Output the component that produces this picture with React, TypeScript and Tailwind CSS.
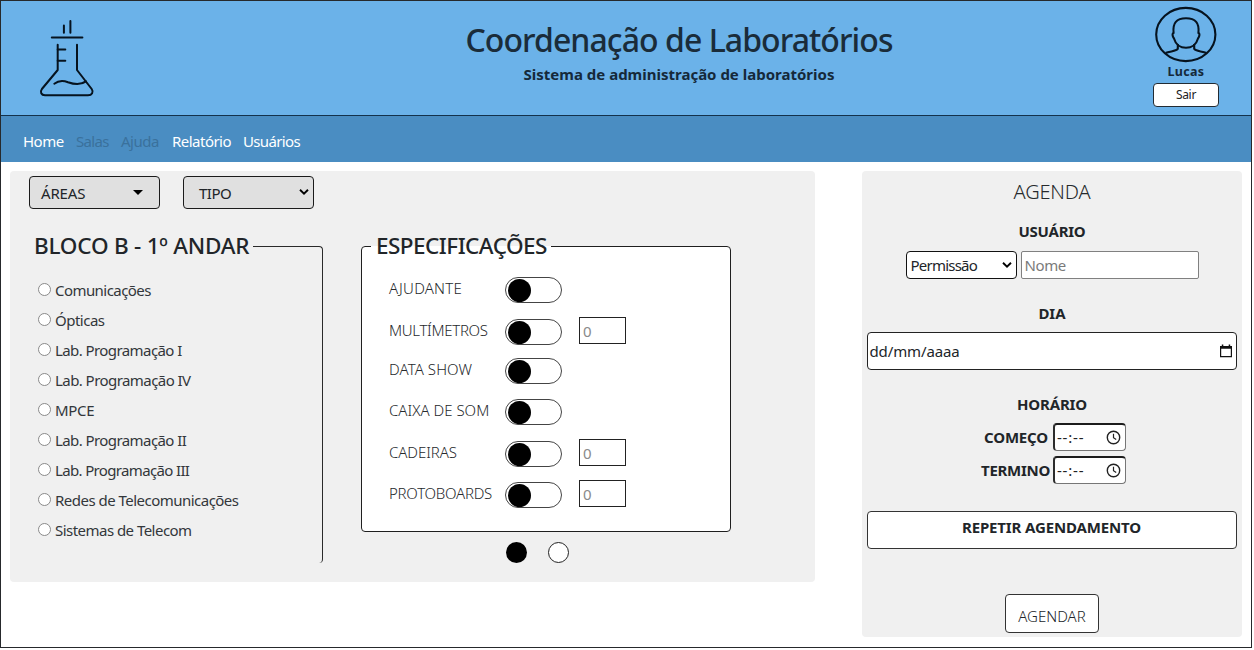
import type { ReactNode } from "react";

const labs: { name: string; tracking: string }[] = [
  { name: "Comunicações", tracking: "tracking-[-0.56px]" },
  { name: "Ópticas", tracking: "tracking-[-0.5px]" },
  { name: "Lab. Programação I", tracking: "tracking-[-0.58px]" },
  { name: "Lab. Programação IV", tracking: "tracking-[-0.56px]" },
  { name: "MPCE", tracking: "tracking-[-0.3px]" },
  { name: "Lab. Programação II", tracking: "tracking-[-0.58px]" },
  { name: "Lab. Programação III", tracking: "tracking-[-0.65px]" },
  { name: "Redes de Telecomunicações", tracking: "tracking-[-0.52px]" },
  { name: "Sistemas de Telecom", tracking: "tracking-[-0.53px]" },
];

const specs: { name: string; tracking: string; height: string; amount: boolean }[] = [
  { name: "AJUDANTE", tracking: "tracking-[0.23px]", height: "h-[42px]", amount: false },
  { name: "MULTÍMETROS", tracking: "tracking-[-0.3px]", height: "h-[39px]", amount: true },
  { name: "DATA SHOW", tracking: "tracking-[0.1px]", height: "h-[41px]", amount: false },
  { name: "CAIXA DE SOM", tracking: "tracking-[0.02px]", height: "h-[42px]", amount: false },
  { name: "CADEIRAS", tracking: "tracking-[-0.05px]", height: "h-[41px]", amount: true },
  { name: "PROTOBOARDS", tracking: "tracking-[-0.25px]", height: "h-[26px]", amount: true },
];

function FlaskLogo() {
  return (
    <svg className="h-[80px] w-[58px]" viewBox="0 0 58 80" fill="none" stroke="#06131f" strokeWidth="2" strokeLinecap="round" strokeLinejoin="round">
      <path d="M25.9 6.5V13.7M32.4 2V13.7" />
      <path d="M13.8 18.6H44.4" />
      <path d="M19.7 25.8V51L3.9 70C1.8 73 3.2 76.3 7 76.3H50C54 76.3 55.8 73 53.7 70L39 51V25.8" />
      <path d="M19.7 30.5H27.3M19.7 41.8H27.3" />
      <path d="M16.3 64.7C20 61.8 24.5 61 30 63.2C36 65.4 43 66 48 62.4" />
    </svg>
  );
}

function UserAvatar() {
  return (
    <svg className="h-[58px] w-[64px]" viewBox="0 0 64 58" fill="none" stroke="#06131f" strokeWidth="2.1" strokeLinejoin="round">
      <ellipse cx="31.8" cy="28.5" rx="29.6" ry="26.6" />
      <path d="M19.6 27C18.5 17 22.5 12.3 32 12.3S45.5 17 44.4 27C46 27.1 45.6 30.5 44 32.5C42.4 38.5 37.5 41.8 32 41.8S21.6 38.5 20 32.5C18.4 30.5 18 27.1 19.6 27Z" />
      <path d="M23.8 38V42.8C22.5 45.6 15.5 45 11.6 47M40.2 38V42.8C41.5 45.6 48.5 45 52.4 47" />
    </svg>
  );
}

function Chevron() {
  return (
    <svg className="h-[6px] w-[10px] shrink-0" viewBox="0 0 10 6" fill="none" stroke="#000" strokeWidth="1.9">
      <path d="M1 0.8L5 4.6L9 0.8" />
    </svg>
  );
}

function Clock() {
  return (
    <svg className="h-[15px] w-[15px]" viewBox="0 0 15 15" fill="none" stroke="#222" strokeWidth="1.4">
      <circle cx="7.5" cy="7.5" r="6.2" />
      <path d="M7.5 3.8V7.8L10.2 9.6" strokeWidth="1.2" />
    </svg>
  );
}

function Calendar() {
  return (
    <svg className="h-[14px] w-[12px]" viewBox="0 0 12 14">
      <path d="M1.8 0.5H3.3V2H8.7V0.5H10.2V2H12V13.2H0V2H1.8ZM1.2 4.8V12H10.8V4.8Z" fill="#111" fillRule="evenodd" />
    </svg>
  );
}

function TimeField() {
  return (
    <div className="flex h-[28px] w-[73px] items-center justify-between rounded-[4px] border border-t-2 border-l-2 border-[#767676] border-t-[#1c1c1c] border-l-[#2c2c2c] bg-white pr-[4px] pb-px pl-[2px]">
      <span className="text-[15px] leading-[20px] tracking-[0.8px] text-[#222]">--:--</span>
      <Clock />
    </div>
  );
}

function Heading({ children, className }: { children: ReactNode; className: string }) {
  return <h3 className={`text-center text-[15px] leading-[20px] font-bold text-[#212529] ${className}`}>{children}</h3>;
}

export default function App() {
  return (
    <div className="h-[650px] w-[1254px] overflow-hidden bg-white font-['Noto_Sans',sans-serif] whitespace-nowrap text-[#212529]">
      <div className="flex h-[648px] w-[1252px] flex-col border border-[#26292c]">
        <header className="grid h-[115px] shrink-0 grid-cols-[106px_1fr_130px] border-b border-[#14324c] bg-[#6bb2e9]">
          <div className="pt-[18px] pl-[37px]">
            <FlaskLogo />
          </div>
          <div className="flex flex-col items-center pt-[17px] pl-[130px]">
            <h1 className="text-[32px] leading-[44px] font-medium tracking-[-0.94px] text-[#1a2c3a]">Coordenação de Laboratórios</h1>
            <p className="mt-[2px] text-[15px] leading-[20px] font-bold text-[#15293a]">Sistema de administração de laboratórios</p>
          </div>
          <div className="flex flex-col items-center pt-[5px]">
            <UserAvatar />
            <span className="text-[12.5px] leading-[16px] font-bold tracking-[0.3px] text-[#15293a]">Lucas</span>
            <button className="mt-[3px] h-[24px] w-[66px] rounded-[4px] border border-[#222b33] bg-white text-[12px] leading-[20px] tracking-[-0.34px] text-[#222]">Sair</button>
          </div>
        </header>

        <nav className="flex h-[46px] shrink-0 items-center bg-[#4a8dc2] pt-[4px] pl-[22px] text-[15px] text-white">
          <a className="w-[53px] tracking-[-0.5px]">Home</a>
          <a className="w-[45px] tracking-[-0.7px] text-[#3a719c]">Salas</a>
          <a className="w-[51px] tracking-[-0.5px] text-[#3a719c]">Ajuda</a>
          <a className="w-[71px] tracking-[-0.52px]">Relatório</a>
          <a className="tracking-[-0.65px]">Usuários</a>
        </nav>

        <main className="flex items-start pt-[9px] pl-[9px]">
          <section className="h-[411px] w-[805px] rounded-[4px] bg-[#f0f0f0] pt-[5px] pl-[19px]">
            <div className="flex gap-[23px]">
              <div className="flex h-[33px] w-[131px] items-center justify-between rounded-[4px] border border-[#1b1b1b] bg-[#e0e0e0] pt-px pr-[16px] pl-[11px]">
                <span className="text-[15px] leading-[20px] tracking-[-0.15px]">ÁREAS</span>
                <svg className="-mt-px h-[5px] w-[10px]" viewBox="0 0 10 5">
                  <path d="M0 0H10L5 5Z" fill="#000" />
                </svg>
              </div>
              <div className="flex h-[33px] w-[131px] items-center justify-between rounded-[4px] border border-[#1b1b1b] bg-[#e0e0e0] pt-px pr-[4px] pl-[15px]">
                <span className="text-[15px] leading-[20px] tracking-[-0.5px]">TIPO</span>
                <span className="-mt-[3px] flex"><Chevron /></span>
              </div>
            </div>

            <div className="flex items-start pt-[19px]">
              <fieldset className="h-[335px] w-[294px] rounded-[4px] border-t border-r border-[#2a2a2a]">
                <legend className="pr-[4px] pl-[5px] text-[22.5px] leading-[36px] font-medium tracking-[-0.22px]">BLOCO B - 1º ANDAR</legend>
                <div className="flex flex-col pt-[11px] pl-[9px]">
                  {labs.map((lab) => (
                    <label key={lab.name} className="flex h-[30px] items-center gap-[4px] text-[15px] leading-[20px] text-[#33373b]">
                      <input type="radio" name="lab" className="mb-[2px] h-[13px] w-[13px] appearance-none rounded-full border border-[#8a8a8a] bg-white" />
                      <span className={lab.tracking}>{lab.name}</span>
                    </label>
                  ))}
                </div>
              </fieldset>

              <div className="ml-[38px] flex w-[370px] flex-col">
                <fieldset className="h-[304px] rounded-[4px] border border-[#1f1f1f] bg-white">
                  <legend className="ml-[9px] pr-[4px] pl-[5px] text-[22.5px] leading-[36px] font-medium tracking-[-0.52px]">ESPECIFICAÇÕES</legend>
                  <div className="pt-[13px] pl-[27px]">
                    {specs.map((spec) => (
                      <div key={spec.name} className={`flex items-start ${spec.height}`}>
                        <span className={`-mt-px w-[116px] text-[15px] leading-[24px] font-light text-[#26292c] ${spec.tracking}`}>{spec.name}</span>
                        <button className="flex h-[26px] w-[57px] shrink-0 items-center rounded-full border border-[#444] pl-[2px]">
                          <span className="h-[23px] w-[23px] rounded-full bg-black" />
                        </button>
                        {spec.amount && (
                          <input type="text" placeholder="0" className="-mt-[2px] ml-[17px] h-[27px] w-[47px] border border-[#222] bg-white pl-[3px] text-[15px] leading-[20px] placeholder:text-[#8a8a8a]" />
                        )}
                      </div>
                    ))}
                  </div>
                </fieldset>
                <div className="flex gap-[21px] pt-[10px] pl-[145px]">
                  <span className="h-[21px] w-[21px] rounded-full bg-black" />
                  <span className="h-[21px] w-[21px] rounded-full border border-[#222] bg-white" />
                </div>
              </div>
            </div>
          </section>

          <aside className="ml-[47px] flex h-[466px] w-[380px] flex-col items-center rounded-[4px] bg-[#f0f0f0] pt-[8px]">
            <h2 className="text-[20px] leading-[26px] font-light tracking-[-0.15px] text-[#26292c]">AGENDA</h2>
            <Heading className="mt-[16px] tracking-[-0.25px]">USUÁRIO</Heading>
            <div className="mt-[10px] flex gap-[4px]">
              <div className="flex h-[28px] w-[111px] items-center justify-between rounded-[4px] border border-[#111] bg-white pr-[4px] pl-[4px]">
                <span className="text-[15px] leading-[20px] tracking-[-0.78px]">Permissão</span>
                <Chevron />
              </div>
              <input type="text" placeholder="Nome" className="h-[28px] w-[178px] rounded-[2px] border border-[#808080] bg-white pl-[3px] text-[15px] tracking-[-0.4px] placeholder:text-[#7a7a7a]" />
            </div>
            <Heading className="mt-[24px]">DIA</Heading>
            <div className="mt-[9px] mr-px flex h-[38px] w-[370px] items-center justify-between rounded-[4px] border border-[#222] bg-white pr-[4px] pl-[2px]">
              <span className="text-[15px] leading-[20px] tracking-[-0.13px]">dd/mm/aaaa</span>
              <Calendar />
            </div>
            <Heading className="mt-[24px] tracking-[-0.16px]">HORÁRIO</Heading>
            <div className="mt-[9px] ml-[6px] flex items-center gap-[5px]">
              <Heading className="tracking-[-0.16px]">COMEÇO</Heading>
              <TimeField />
            </div>
            <div className="mt-[5px] ml-[3px] flex items-center gap-[3px]">
              <Heading className="tracking-[-0.28px]">TERMINO</Heading>
              <TimeField />
            </div>
            <button className="mt-[27px] mr-px h-[38px] w-[370px] rounded-[4px] border border-[#333] bg-white pb-[5px] text-[15px] font-bold tracking-[-0.14px]">REPETIR AGENDAMENTO</button>
            <button className="mt-[45px] h-[39px] w-[94px] rounded-[4px] border border-[#333] bg-white pt-[5px] text-[15px] font-light tracking-[0.03px]">AGENDAR</button>
          </aside>
        </main>
      </div>
    </div>
  );
}
